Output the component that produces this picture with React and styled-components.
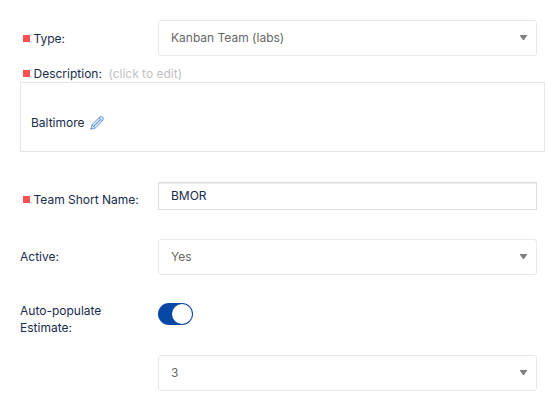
import React from 'react';
import { styled, createGlobalStyle } from 'styled-components';

const GlobalStyle = createGlobalStyle`
  *, *::before, *::after {
    box-sizing: border-box;
  }

  body {
    margin: 0;
    background-color: #ffffff;
    color: #172b4d;
    font-family: Inter, 'Liberation Sans', sans-serif;
    font-size: 12px;
    line-height: 17px;
    letter-spacing: 0;
  }
`;

const Form = styled.div`
  display: flex;
  flex-direction: column;
  padding: 20px 9px 0 20px;
`;

const Row = styled.div`
  display: flex;
  align-items: flex-start;
  height: ${({ height }) => height};
  padding-right: 8px;
`;

const Label = styled.div`
  display: flex;
  align-items: center;
  width: 138px;
  flex-shrink: 0;
  padding-top: ${({ offset }) => offset || '0'};
  white-space: pre-line;
`;

const TallLabel = styled(Label)`
  margin-top: -1px;
`;

const Required = styled.span`
  width: 7px;
  height: 7px;
  margin: 0 3.5px 0 3px;
  background-color: #ff5050;
`;

const Select = styled.div`
  display: flex;
  flex: 1;
  align-items: center;
  justify-content: space-between;
  height: 36px;
  padding: 0 9px 1px 12px;
  border: 1px solid #e8e8e8;
  border-radius: 3px;
  color: #666666;
`;

const Arrow = styled.span`
  width: 7px;
  height: 5px;
  background-color: #808080;
  clip-path: polygon(0 0, 100% 0, 100% 15%, 57% 100%, 43% 100%, 0 15%);
`;

const Input = styled.input`
  flex: 1;
  min-width: 0;
  height: 28px;
  padding: 0 12px 1px;
  border: 1px solid #dcdcdc;
  border-radius: 0;
  outline: none;
  box-shadow: inset 0 1px 0 #eeeeee;
  color: inherit;
  font: inherit;
  letter-spacing: inherit;
`;

const Hint = styled.span`
  margin-left: 6.5px;
  color: #c1c1c1;
`;

const DescriptionLabel = styled(Label)`
  width: 100%;
  height: 26px;
`;

const Description = styled.div`
  display: flex;
  align-items: center;
  height: 70px;
  margin-bottom: 30px;
  padding: 11px 10px 0;
  border: 1px solid #e6e6e6;
`;

const Pencil = styled.svg`
  width: 14px;
  height: 14px;
  margin-left: 5px;
`;

const Toggle = styled.button`
  display: flex;
  align-items: center;
  justify-content: flex-end;
  width: 35px;
  height: 22px;
  padding: 1px;
  border: 0;
  border-radius: 11px;
  background-color: #0747a6;
`;

const Knob = styled.span`
  width: 20px;
  height: 20px;
  border-radius: 50%;
  background-color: #ffffff;
`;

function Dropdown({ value }) {
  return (
    <Select>
      {value}
      <Arrow />
    </Select>
  );
}

export default function App() {
  return (
    <>
      <GlobalStyle />
      <Form>
        <Row height="36px">
          <Label offset="10px">
            <Required />
            Type:
          </Label>
          <Dropdown value="Kanban Team (labs)" />
        </Row>
        <DescriptionLabel offset="9px">
          <Required />
          Description:
          <Hint>(click to edit)</Hint>
        </DescriptionLabel>
        <Description>
          Baltimore
          <Pencil viewBox="0 0 14 14" fill="none">
            <path
              d="M0.8 13.2l1-4.4 7.2-7.2q2.4-1.8 3.8-.5t-.4 3.9L5.2 12.2z"
              fill="#cfe2f7"
              stroke="#6497d8"
              strokeWidth="0.9"
            />
            <path d="M3.8 10.2l6.4-6.4" stroke="#4d83cb" strokeWidth="0.9" />
            <path
              d="M9 2.2l2.8 2.8M2.2 9l2.8 2.8M0.8 13.2l1-1"
              stroke="#1d5cae"
              strokeWidth="1"
              strokeDasharray="1 0.8"
            />
          </Pencil>
        </Description>
        <Row height="57px">
          <Label offset="9px">
            <Required />
            Team Short Name:
          </Label>
          <Input defaultValue="BMOR" />
        </Row>
        <Row height="64px">
          <Label offset="9px">Active:</Label>
          <Dropdown value="Yes" />
        </Row>
        <Row height="52px">
          <TallLabel>{'Auto-populate\nEstimate:'}</TallLabel>
          <Toggle>
            <Knob />
          </Toggle>
        </Row>
        <Row height="36px">
          <Label />
          <Dropdown value="3" />
        </Row>
      </Form>
    </>
  );
}
